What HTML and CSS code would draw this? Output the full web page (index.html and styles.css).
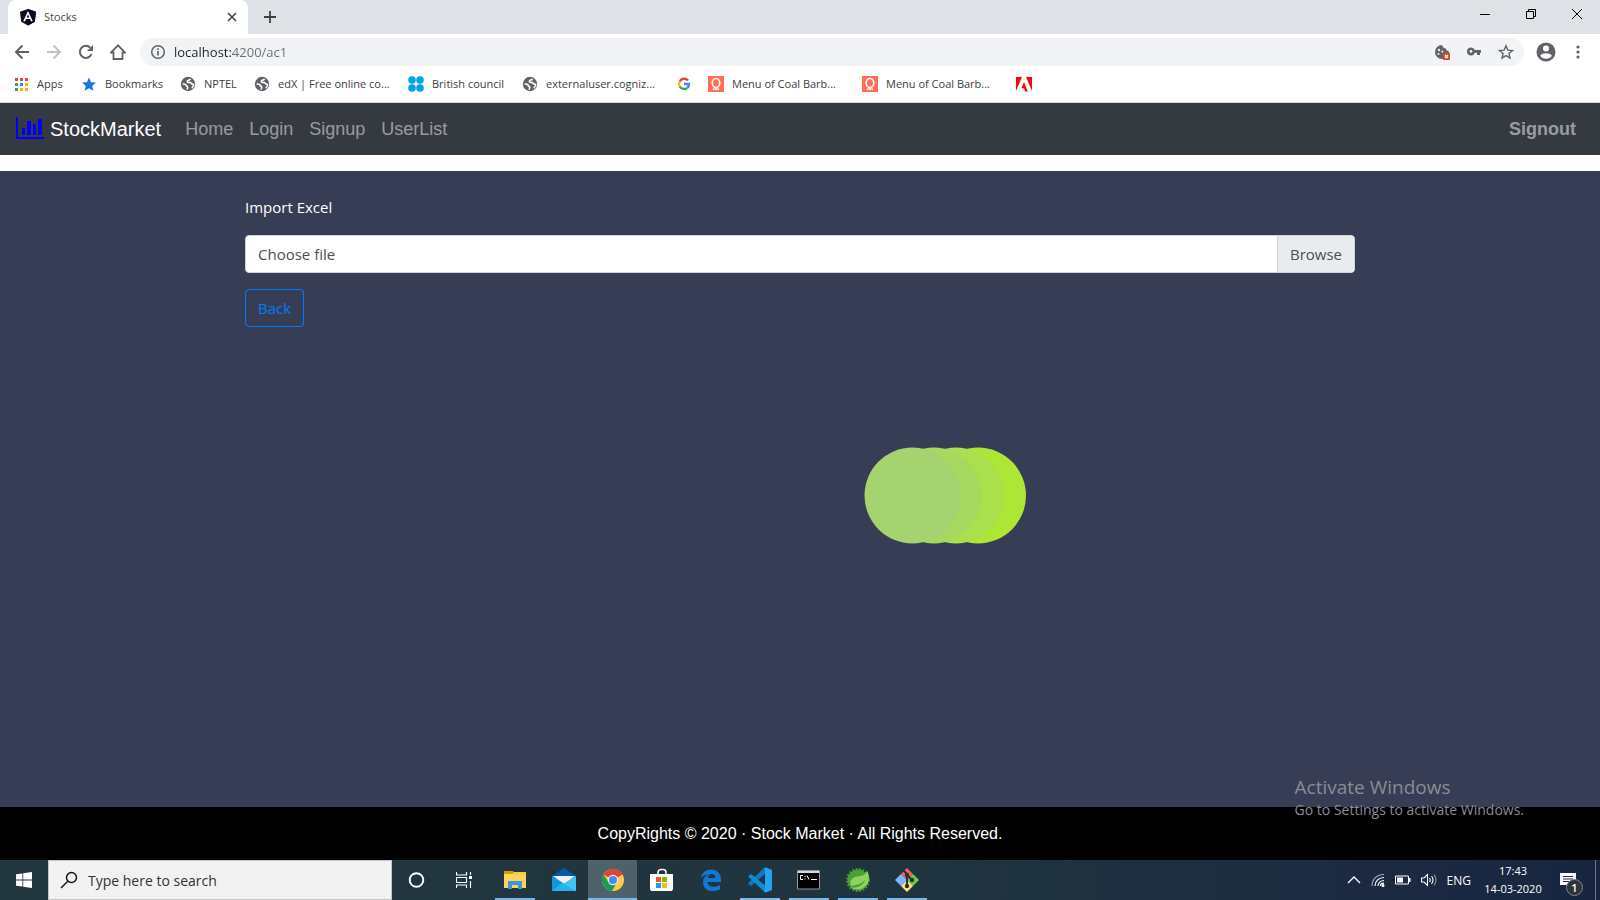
FILE: index.html
```html
<!DOCTYPE html>
<html lang="en">
<head>
<meta charset="utf-8">
<meta name="viewport" content="width=device-width, initial-scale=1">
<title>Stocks</title>
<link rel="stylesheet" href="styles.css">
</head>
<body>
<svg class="defs" width="0" height="0" aria-hidden="true">
  <symbol id="globe" viewBox="0 0 16 16">
    <circle cx="8" cy="8" r="7.200" fill="#5f6368"/>
    <path d="M10.500 2.800c-.3 1.200-1.300 1.200-2.200 1.400-1.300.3-1.200 1.700-.2 2.200 1 .4 1.300-.3 2.300.1.9.4.8 1.500 1.700 1.600.6.100 1.300-.1 1.500.4.2 1.100-.7 2.600-1.800 3.600M2.600 8.200c1.200-.3 2.400-.2 3.100.4.700.6.300 1.400 1.200 1.700.9.400 1 1.200.6 1.900-.2.500-.3.900-.2 1.400" fill="none" stroke="#fff" stroke-width="1.600"/>
  </symbol>
  <symbol id="menu" viewBox="0 0 16 16">
    <path fill="#ff6e55" d="M0 0h16v16H0z"/>
    <ellipse cx="8" cy="7" rx="3.800" ry="4.500" fill="none" stroke="#fff" stroke-width="1.600"/>
    <path d="M5.500 12.500v1.500M7.500 11.500l-.5 2.500M8.500 11.500l.5 2.500M10.500 12.500v1.500" stroke="#fff" stroke-width="1.300"/>
  </symbol>
</svg>

<header class="browser">
  <div class="tabstrip">
    <div class="tab">
      <svg width="18" height="18" viewBox="0 0 18 18"><path d="M9 1l8 2.800-1.200 10L9 17.500l-6.800-3.700L1 3.800z" fill="#0d1018"/><path d="M9 1v16.500l6.800-3.700L17 3.800z" fill="#000820"/><path d="M9 3L4.200 13.300H6l1-2.400h4l1 2.400h1.800L9 3zm1.300 6.400H7.700L9 6.200z" fill="#fff"/></svg>
      <span class="tab-title">Stocks</span>
      <button class="plain" aria-label="Close tab"><svg width="12" height="12" viewBox="0 0 12 12"><path d="M2 2l8 8M10 2l-8 8" stroke="#45494d" stroke-width="1.700"/></svg></button>
    </div>
    <button class="plain" aria-label="New tab"><svg width="14" height="14" viewBox="0 0 14 14"><path d="M7 1v12M1 7h12" stroke="#3c4043" stroke-width="1.800"/></svg></button>
    <div class="window-buttons">
      <button class="plain" aria-label="Minimize"><svg width="12" height="12" viewBox="0 0 12 12"><path d="M1 6.500h10" stroke="#000"/></svg></button>
      <button class="plain" aria-label="Restore"><svg width="12" height="12" viewBox="0 0 12 12"><path d="M1.500 3.500h7v7h-7zM3.500 3.500v-2h7v7h-2" fill="none" stroke="#000"/></svg></button>
      <button class="plain" aria-label="Close"><svg width="12" height="12" viewBox="0 0 12 12"><path d="M1 1l10 10M11 1L1 11" stroke="#000"/></svg></button>
    </div>
  </div>

  <div class="toolbar">
    <button class="plain" aria-label="Back"><svg width="16" height="16" viewBox="0 0 16 16"><path d="M15 8H2M8.500 1.500L2 8l6.500 6.500" fill="none" stroke="#5f6368" stroke-width="2"/></svg></button>
    <button class="plain" aria-label="Forward"><svg width="16" height="16" viewBox="0 0 16 16"><path d="M1 8h13M7.500 1.500L14 8l-6.500 6.500" fill="none" stroke="#c0c2c5" stroke-width="2"/></svg></button>
    <button class="plain" aria-label="Reload"><svg width="16" height="16" viewBox="0 0 16 16"><path d="M13.500 10A6 6 0 1 1 12.300 3.800" fill="none" stroke="#5f6368" stroke-width="2"/><path d="M15 1v6H9z" fill="#5f6368"/></svg></button>
    <button class="plain" aria-label="Home"><svg width="16" height="16" viewBox="0 0 16 16"><path d="M1 8.500h2.500V15h9V8.500H15L8 1.300z" fill="none" stroke="#5f6368" stroke-width="1.800"/></svg></button>
    <div class="omnibox">
      <svg width="16" height="16" viewBox="0 0 16 16"><circle cx="8" cy="8" r="6.300" fill="none" stroke="#5f6368" stroke-width="1.500"/><path d="M8 7v4.500M8 4.300v1.700" stroke="#5f6368" stroke-width="1.700"/></svg>
      <input class="address" type="text" aria-label="Address" value="localhost:4200/ac1">
      <button class="plain" aria-label="Cookies blocked"><svg width="16" height="16" viewBox="0 0 16 16"><path d="M8 1a7 7 0 1 0 0 14h1V9h6c0-1-.3-1.600-.5-2-1.500 0-2.500-1-2.500-2.500C10.200 4.500 8.500 3 8 1z" fill="#5f6368"/><circle cx="5" cy="6" r="1.200" fill="#f1f3f4"/><circle cx="4.500" cy="10" r="1" fill="#f1f3f4"/><circle cx="8.300" cy="7.500" r="1" fill="#f1f3f4"/><path d="M9 9h7v7H9z" fill="#db4437"/><path d="M11 11l3 3M14 11l-3 3" stroke="#fff" stroke-width="1.200"/></svg></button>
      <button class="plain" aria-label="Saved passwords"><svg width="16" height="16" viewBox="0 0 16 16"><path d="M5 3.500a4 4 0 1 0 3.800 5.200H11V11h3V8.700h1V6H8.800A4 4 0 0 0 5 3.500zM5 6a1.400 1.400 0 1 1 0 2.800A1.400 1.400 0 0 1 5 6z" fill="#5f6368" fill-rule="evenodd"/></svg></button>
      <button class="plain" aria-label="Bookmark this tab"><svg width="16" height="16" viewBox="0 0 16 16"><path d="M8 1.800l1.800 4.300 4.700.4-3.600 3 1.100 4.600-4-2.500-4 2.500 1.100-4.600-3.600-3 4.700-.4z" fill="none" stroke="#5f6368" stroke-width="1.400"/></svg></button>
    </div>
    <button class="plain profile" aria-label="Profile"><svg width="20" height="20" viewBox="0 0 20 20"><circle cx="10" cy="10" r="9.500" fill="#5f6368"/><circle cx="10" cy="6.500" r="3" fill="#fff"/><path d="M4 13.700c1.200-1.700 3.600-2.500 6-2.500s4.800.8 6 2.500c-1.300 1.900-3.500 3-6 3s-4.700-1.100-6-3z" fill="#fff"/></svg></button>
    <button class="plain" aria-label="Menu"><svg width="16" height="16" viewBox="0 0 16 16" fill="#5f6368"><circle cx="8" cy="3" r="1.600"/><circle cx="8" cy="8" r="1.600"/><circle cx="8" cy="13" r="1.600"/></svg></button>
  </div>

  <nav class="bookmarks" aria-label="Bookmarks">
    <a href="#"><svg width="16" height="16" viewBox="0 0 16 16"><path d="M2 2h3v3H2zM7 2h3v3H7zM12 2h3v3h-3z" fill="#ea4335"/><path d="M2 7h3v3H2zM2 12h3v3H2z" fill="#34a853"/><path d="M7 7h3v3H7z" fill="#1a8cff"/><path d="M12 7h3v3h-3zM7 12h3v3H7zM12 12h3v3h-3z" fill="#fbb105"/></svg><span>Apps</span></a>
    <a href="#"><svg width="16" height="16" viewBox="0 0 16 16"><path d="M8 1.500l2 4.700 5 .4-3.800 3.300 1.200 4.900L8 12.200l-4.400 2.600 1.200-4.900L1 6.600l5-.4z" fill="#1a73e8"/></svg><span>Bookmarks</span></a>
    <a href="#"><svg width="16" height="16"><use href="#globe"/></svg><span>NPTEL</span></a>
    <a href="#"><svg width="16" height="16"><use href="#globe"/></svg><span>edX | Free online co...</span></a>
    <a href="#"><svg width="16" height="16" viewBox="0 0 16 16" fill="#00a0f0"><circle cx="4" cy="4" r="3.800"/><circle cx="12" cy="4" r="3.800"/><circle cx="4" cy="12" r="3.800"/><circle cx="12" cy="12" r="3.800"/></svg><span>British council</span></a>
    <a href="#"><svg width="16" height="16"><use href="#globe"/></svg><span>externaluser.cogniz...</span></a>
    <a href="#" aria-label="Google"><svg width="16" height="16" viewBox="0 0 16 16" fill="none" stroke-width="2.400"><path d="M12 4.600A5 5 0 0 0 3.700 5.500" stroke="#ea4335"/><path d="M3.700 5.500a5 5 0 0 0 0 5" stroke="#fbbc05"/><path d="M3.700 10.500a5 5 0 0 0 7.600 1.300" stroke="#34a853"/><path d="M11.300 11.800A4.800 4.800 0 0 0 12.900 8H8" stroke="#4285f4"/></svg></a>
    <a href="#"><svg width="16" height="16"><use href="#menu"/></svg><span>Menu of Coal Barb...</span></a>
    <a href="#"><svg width="16" height="16"><use href="#menu"/></svg><span>Menu of Coal Barb...</span></a>
    <a href="#" aria-label="Adobe"><svg width="16" height="16" viewBox="0 0 16 16" fill="#f00a0a"><path d="M0 1h6L0 15zM10 1h6v14zM8 6l3.800 9.500H9.200L8 12.200H5.300z"/></svg></a>
  </nav>
</header>

<nav class="navbar" aria-label="Main">
  <a class="brand" href="#"><svg width="30" height="24" viewBox="1 1 30 24" fill="#00f"><path d="M1 1h2v20h26v2H1zM7 12h3v7H7zM12 5h4v14h-4zM18 8h3v11h-3zM23 3h4v16h-4z"/></svg>StockMarket</a>
  <a class="nav-link" href="#">Home</a>
  <a class="nav-link" href="#">Login</a>
  <a class="nav-link" href="#">Signup</a>
  <a class="nav-link" href="#">UserList</a>
  <a class="nav-link signout" href="#">Signout</a>
</nav>

<main class="page">
  <div class="container">
    <label class="field-label" for="excel">Import Excel</label>
    <div class="file">
      <input id="excel" class="file-input" type="file">
      <label class="file-face" for="excel"><span class="file-name">Choose file</span><span class="file-browse">Browse</span></label>
    </div>
    <button class="back">Back</button>
  </div>
  <svg class="loader" width="164" height="98" viewBox="0 0 164 98">
    <circle cx="114" cy="48.500" r="48" fill="#aee636"/>
    <circle cx="92" cy="48.500" r="48" fill="#a9e04b"/>
    <circle cx="70" cy="48.500" r="48" fill="#a6d95d"/>
    <circle cx="48.500" cy="48.500" r="48" fill="#a4d370"/>
  </svg>
</main>

<footer class="copyright">CopyRights © 2020 · Stock Market · All Rights Reserved.</footer>

<aside class="activate">
  <p class="activate-title">Activate Windows</p>
  <p class="activate-text">Go to Settings to activate Windows.</p>
</aside>

<div class="taskbar">
  <button class="task start" aria-label="Start"><svg width="16" height="16" viewBox="0 0 16 16" fill="#fff"><path d="M0 2.300L6.400 1.400v6.200H0zM7.200 1.300L16 0v7.600H7.200zM0 8.400h6.400v6.200L0 13.700zM7.200 8.400H16V16l-8.800-1.300z"/></svg></button>
  <label class="search"><svg width="18" height="18" viewBox="0 0 18 18" fill="none" stroke="#111" stroke-width="1.400"><circle cx="11.500" cy="6.500" r="5"/><path d="M8 10l-7 7"/></svg><input type="search" placeholder="Type here to search" aria-label="Search"></label>
  <button class="task" aria-label="Cortana"><svg width="18" height="18" viewBox="0 0 18 18"><circle cx="8.500" cy="9" r="6.800" fill="none" stroke="#fff" stroke-width="1.900"/></svg></button>
  <button class="task" aria-label="Task view"><svg width="20" height="18" viewBox="1 0 20 18" fill="none" stroke="#fff" stroke-width="1.200"><path d="M1.500 1v3h10V1M1.500 17v-3h10v3M1.500 6.500h10v5h-10zM15.500 1v3M15.500 10v7"/><path d="M14 5h3v3h-3z" fill="#fff" stroke="none"/></svg></button>
  <button class="task open" aria-label="File Explorer"><svg width="24" height="24" viewBox="0 0 24 24"><path d="M1 3h9l1 2h12v15H1z" fill="#fcd35e"/><path d="M1 3h9v3H1z" fill="#d99a08"/><path d="M11 4h12v3H11z" fill="#fbc93d"/><path d="M5 21v-8h14v8h-4v-4H9v4z" fill="#3b97dd"/></svg></button>
  <button class="task" aria-label="Mail"><svg width="26" height="26" viewBox="0 0 26 26"><path d="M1 9l12-8 12 8v5H1z" fill="#0459a8"/><path d="M2 9h22L13 18z" fill="#f1f1f1"/><path d="M1 9l12 7.500L25 9v15H1z" fill="#29b1ee"/><path d="M1 9l10 6.500L1 24z" fill="#1395de"/><path d="M13 17l12-8v15z" fill="#39c5f6"/></svg></button>
  <button class="task active" aria-label="Chrome"><svg width="24" height="24" viewBox="0 0 24 24"><circle cx="12" cy="12" r="11" fill="#fccc44"/><path d="M12 12L2.500 6.500A11 11 0 0 1 21.500 6.500z" fill="#dc4437"/><path d="M12 1a11 11 0 0 1 9.500 6H12z" fill="#dc4437"/><path d="M2.500 6.500A11 11 0 0 0 11 23l5-8.500-9-1z" fill="#189c58"/><circle cx="12" cy="12" r="5.200" fill="#f1f1f1"/><circle cx="12" cy="12" r="4.100" fill="#4a89f4"/></svg></button>
  <button class="task" aria-label="Store"><svg width="24" height="24" viewBox="0 0 24 24"><path d="M8 7V4.500a3 3 0 0 1 3-3h2a3 3 0 0 1 3 3V7" fill="none" stroke="#fff" stroke-width="1.500"/><path d="M0 6h23v15l-1 2H1l-1-2z" fill="#fff"/><path d="M6 9h5v5H6z" fill="#f35325"/><path d="M12 9h5v5h-5z" fill="#80ba02"/><path d="M6 15h5v5H6z" fill="#05a6f0"/><path d="M12 15h5v5h-5z" fill="#ffba08"/></svg></button>
  <button class="task" aria-label="Edge"><svg width="22" height="24" viewBox="0 0 22 24"><path d="M1 10C2 4.500 6 1.500 11 1.500c6.500 0 10 4.500 10 10.500v2H7.500c.2 3.500 3 4.800 6 4.800 2.500 0 4.700-.7 6.500-1.800v4.300c-2 1.200-4.600 1.700-7.200 1.700-6 0-9.800-3.500-9.800-8.800 0-3.500 1.800-6.200 5-7.800C4.800 6.500 2.500 8 1 10zm6.600 0h7.700c0-2.400-1.200-4-3.700-4-2.300 0-3.800 1.700-4 4z" fill="#0f7ad6"/></svg></button>
  <button class="task open" aria-label="Visual Studio Code"><svg width="26" height="26" viewBox="0 0 26 26"><path d="M18 7L4 19l-3-2.500L17 1h1z" fill="#1079c4"/><path d="M1 9.500L4 7l15 12v6l-2-.5z" fill="#0d8dd9"/><path d="M17 1l2-.5 6 2.500v20l-6 2.500-2-.8 1-1.700V2.500z" fill="#25a3f2"/></svg></button>
  <button class="task open" aria-label="Command Prompt"><svg width="24" height="20" viewBox="0 0 24 20"><path d="M.5.5h22v18.500H.5z" fill="#000" stroke="#8f9699"/><path d="M1 1h21v2H1z" fill="#d8dcdf"/><g fill="none" stroke="#fff" stroke-width="1"><path d="M6 5.500H3.500v4H6M8 6v1M8 8.500v1M10 5.500l2 4M14 9.500h6"/></g></svg></button>
  <button class="task open" aria-label="Spring"><svg width="26" height="26" viewBox="0 0 26 26"><circle cx="13" cy="13" r="10.500" fill="#4aa13a"/><circle cx="13" cy="13" r="11" fill="none" stroke="#3f9a35" stroke-width="2" stroke-dasharray="2 1.500"/><path d="M22.500 4c1.500 5 2.500 10-1 14-3.500 4.500-10 6-16 2.500 7 1 12-1.500 15-8-5 5.500-9 5-14.500 6.500-2-6 1.500-9 7-9.500 4-.3 7-1.500 9.500-5.500z" fill="#8ed35f"/></svg></button>
  <button class="task open" aria-label="Git"><svg width="26" height="26" viewBox="0 0 26 26"><path d="M13 1l6 6-6 6-6-6z" fill="#f0635a"/><path d="M7 7l6 6-6 6-6-6z" fill="#80b3ff"/><path d="M19 7l6 6-6 6-6-6z" fill="#7ac74f"/><path d="M13 13l6 6-6 6-6-6z" fill="#ffe480"/><path d="M9 3l4 4v12M13 8l5 5" fill="none" stroke="#253239" stroke-width="2"/><circle cx="13" cy="8" r="2.200" fill="#253239"/><circle cx="18" cy="13" r="2.200" fill="#253239"/><circle cx="13" cy="19" r="2.200" fill="#253239"/></svg></button>

  <div class="tray">
    <svg width="14" height="14" viewBox="0 0 14 14"><path d="M1 10l6-6 6 6" fill="none" stroke="#fff" stroke-width="1.300"/></svg>
    <svg width="14" height="14" viewBox="0 0 14 14" fill="none" stroke="#fff" stroke-width="1.200"><path d="M1 13C1 6 6 1.500 13 1.500" opacity=".6"/><path d="M4 13c0-5 4-8.500 9-8.500M7 13c0-3 2.500-5.500 6-5.500M9.500 13c0-1.500 1.500-2.800 3.500-2.800"/><circle cx="12" cy="12.500" r=".9" fill="#fff"/></svg>
    <svg width="16" height="14" viewBox="0 0 16 14"><path d="M.5 3h13v8H.5z" fill="none" stroke="#fff"/><path d="M2 4.500h6v5H2zM14 5h1.500v4H14z" fill="#fff"/></svg>
    <svg width="16" height="14" viewBox="0 0 16 14" fill="none" stroke="#fff" stroke-width="1.100"><path d="M.5 5h2.500l3.500-3.500v11L3 9H.5zM8.500 5q1.500 2 0 4M10.500 3q3 4 0 8"/><path d="M13 1.500q4 5.500 0 11" opacity=".5"/></svg>
    <span>ENG</span>
    <time class="clock" datetime="2020-03-14T17:43"><span>17:43</span><span>14-03-2020</span></time>
    <button class="plain notice" aria-label="Notifications"><svg width="18" height="18" viewBox="0 0 18 18"><path d="M1 2h16v12h-5v3l-3-3H1z" fill="#fff"/><path d="M4 5.500h10M4 8h10M4 10.500h6" stroke="#1c2940" stroke-width="1.200"/></svg><span class="badge">1</span></button>
    <span class="peek"></span>
  </div>
</div>
</body>
</html>
```

FILE: styles.css
```css
* { box-sizing: border-box; }

body {
  margin: 0;
  min-height: 100vh;
  display: flex;
  flex-direction: column;
  background: #fff;
  font-family: "Open Sans", "Noto Sans", sans-serif;
  font-size: 15px;
}

svg { display: block; flex: none; }
.defs { position: absolute; }
a { color: inherit; text-decoration: none; }
button, input { font: inherit; }

.plain {
  display: flex;
  padding: 0;
  border: 0;
  background: none;
}

/* Browser chrome */
.browser { border-bottom: 1px solid #d5d8db; }

.tabstrip {
  display: flex;
  align-items: center;
  gap: 15px;
  height: 34px;
  padding: 0 16px 0 8px;
  background: #dee1e6;
}

.tab {
  display: flex;
  align-items: center;
  gap: 7px;
  width: 240px;
  height: 34px;
  padding: 0 10px 0 11px;
  border-radius: 8px 8px 0 0;
  background: #fff;
}

.tab-title {
  flex: 1;
  padding-bottom: 2px;
  font-size: 11px;
  color: #45494d;
}

.window-buttons {
  display: flex;
  align-items: center;
  gap: 34px;
  height: 28px;
  margin: 0 1px 6px auto;
}

.toolbar {
  display: flex;
  align-items: center;
  gap: 16px;
  height: 36px;
  padding: 0 14px;
}

.omnibox {
  flex: 1;
  display: flex;
  align-items: center;
  gap: 16px;
  height: 28px;
  margin: 0 -2px;
  padding: 0 10px;
  border-radius: 14px;
  background: #f1f3f4;
}

.address {
  flex: 1;
  margin-left: -8px;
  padding: 0;
  border: 0;
  outline: 0;
  font-size: 13px;
  color: transparent;
  background: linear-gradient(90deg, #202124 57px, #6a6e73 57px);
  background-clip: text;
  -webkit-background-clip: text;
}

.profile { margin: 0 -2px; }

.bookmarks {
  display: grid;
  grid-template-columns: 68px 99px 74px 154px 114px 154px 32px 154px 154px 32px;
  align-items: center;
  height: 32px;
  padding: 0 13px 4px;
  font-size: 11px;
  color: #3c4043;
  white-space: nowrap;
}

.bookmarks a {
  display: flex;
  align-items: center;
  gap: 8px;
}

.bookmarks span { padding-bottom: 2px; }

/* Site navigation */
.navbar {
  display: flex;
  align-items: center;
  height: 52px;
  padding: 0 16px;
  background: #343a40;
  font-family: "Liberation Sans", Arial, sans-serif;
  font-size: 18px;
  color: rgba(255, 255, 255, .5);
}

.brand {
  display: flex;
  align-items: center;
  gap: 4px;
  margin-right: 16px;
  font-size: 20px;
  color: #fff;
}

.nav-link { padding: 8px; }
.signout { margin-left: auto; font-weight: 700; }

/* Import page */
.page {
  flex: 1;
  margin-top: 16px;
  padding-top: 24px;
  background: #383d56;
}

.container {
  width: 100%;
  max-width: 1140px;
  margin: 0 auto;
  padding: 0 15px;
}

.field-label {
  display: block;
  margin-bottom: 16px;
  line-height: 24px;
  color: #fff;
}

.file {
  position: relative;
  height: 38px;
  margin-bottom: 16px;
}

.file-input {
  position: absolute;
  inset: 0;
  width: 100%;
  opacity: 0;
}

.file-face {
  display: flex;
  height: 38px;
  border: 1px solid #ced4da;
  border-radius: 4px;
  background: #fff;
  color: #495057;
  line-height: 36px;
  overflow: hidden;
}

.file-name { flex: 1; padding: 0 12px; }

.file-browse {
  padding: 0 12px;
  border-left: 1px solid #ced4da;
  background: #e9ecef;
}

.back {
  height: 38px;
  padding: 0 12px;
  border: 1px solid #007bff;
  border-radius: 4px;
  background: none;
  color: #007bff;
}

.loader { margin: 120px 0 0 54%; }

.copyright {
  padding: 15px 16px 14px;
  background: #000;
  color: #fff;
  font: 16px/24px "Liberation Sans", Arial, sans-serif;
  text-align: center;
}

/* Watermark over the page */
.activate {
  position: absolute;
  right: 76px;
  bottom: 80px;
  color: #8a8c94;
  font-size: 14px;
}

.activate p { margin: 0; line-height: 20px; }
.activate .activate-title { font-size: 19px; line-height: 26px; }

/* Taskbar */
.taskbar {
  display: flex;
  height: 40px;
  background: linear-gradient(90deg, #22373f 0%, #20343f 60%, #1c2c40 80%, #182541 100%);
  color: #fff;
}

.task {
  display: flex;
  align-items: center;
  justify-content: center;
  width: 49px;
  padding: 0;
  border: 0;
  background: none;
}

.start { width: 48px; }
.open { background: linear-gradient(#76b9ed, #76b9ed) center bottom / 40px 2px no-repeat; }
.active {
  background: linear-gradient(#76b9ed, #76b9ed) center bottom / 100% 2px no-repeat, #4f6269;
}

.search {
  display: flex;
  align-items: center;
  gap: 10px;
  width: 344px;
  padding: 0 11px;
  border: 1px solid #c4c4c4;
  background: #f2f2f2;
}

.search input {
  flex: 1;
  min-width: 0;
  padding: 0;
  border: 0;
  outline: 0;
  background: none;
  font-size: 14px;
}

.search input::placeholder { color: #333; opacity: 1; }

.tray {
  display: flex;
  align-items: center;
  gap: 10px;
  margin-left: auto;
  font-size: 12px;
}

.clock {
  display: flex;
  flex-direction: column;
  align-items: center;
  width: 64px;
  font-size: 11px;
  line-height: 18px;
}

.notice { position: relative; margin-left: 4px; }

.badge {
  position: absolute;
  left: 7px;
  top: 8px;
  width: 17px;
  height: 17px;
  border: 1px solid #85888c;
  border-radius: 50%;
  background: #30343a;
  color: #fff;
  font-size: 11px;
  font-weight: 600;
  line-height: 15px;
  text-align: center;
}

.peek {
  width: 5px;
  height: 40px;
  margin-left: 8px;
  border-left: 1px solid #6d7684;
}
```
